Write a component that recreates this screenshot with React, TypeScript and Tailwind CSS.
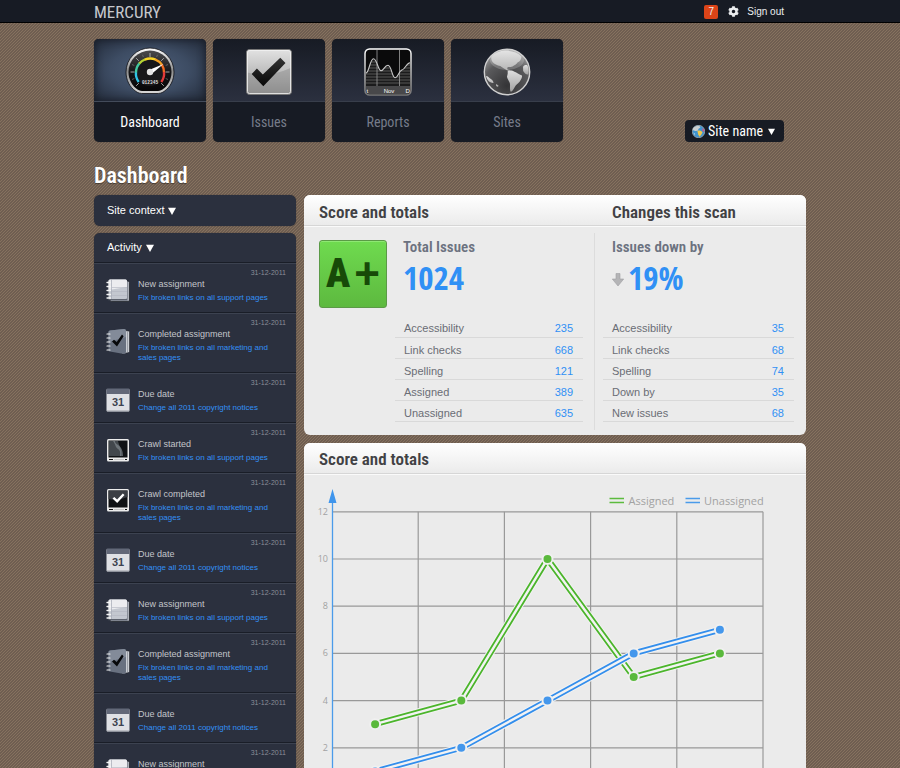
import type { ReactNode } from "react";
import { FaCog } from "react-icons/fa";

const NARROW = "font-['Roboto_Condensed','Liberation_Sans_Narrow',sans-serif]";
const DISPLAY = "font-['Open_Sans_Condensed','Roboto_Condensed',sans-serif]";

/* ---------- Navigation icons ---------- */

function GaugeIcon() {
  return (
    <svg viewBox="0 0 50 48" className="h-12 w-[50px]" aria-hidden="true">
      <defs>
        <linearGradient id="gRim" x1="0" y1="0" x2="0" y2="1">
          <stop offset="0" stopColor="#fff" />
          <stop offset="0.5" stopColor="#8d8d8d" />
          <stop offset="1" stopColor="#d8d8d8" />
        </linearGradient>
        <linearGradient id="gFace" x1="0" y1="0" x2="0" y2="1">
          <stop offset="0" stopColor="#4b4b4d" />
          <stop offset="0.55" stopColor="#131315" />
          <stop offset="1" stopColor="#060607" />
        </linearGradient>
      </defs>
      <path d="M11 44.500C4.500 40 1 33 1 25a24 24 0 0 1 48 0c0 8-3.500 15-10 19.500-2.500 1.800-5 2-7 2H18c-2 0-4.500-.2-7-2z" fill="url(#gRim)" stroke="#101217" strokeWidth=".8" />
      <path d="M12.500 42.500C7 38.500 3.500 32.500 3.500 25a21.500 21.500 0 0 1 43 0c0 7.500-3.500 13.500-9 17.500-2 1.300-4 1.500-6 1.500h-13c-2 0-4-.2-6-1.500z" fill="url(#gFace)" />
      <path d="M25 6v4M5.500 25h4M40.500 25h4M11.200 11.200l2.600 2.600M38.800 11.200l-2.600 2.600M11.200 38.800l2.600-2.600M38.800 38.800l-2.600-2.600" stroke="#b5b5b5" strokeWidth=".9" />
      <path d="M17.500 7.800l.9 2.200M32.500 7.800l-.9 2.200M7 17.500l2.300 1M43 17.500l-2.300 1M7 32.500l2.300-1M43 32.500l-2.300-1" stroke="#777" strokeWidth=".7" />
      <circle cx="25" cy="25" r="14" fill="#18181a" />
      <g fill="none" strokeWidth="2.400">
        <path d="M13.700 35A14 14 0 0 1 11 25" stroke="#2fc3e6" />
        <path d="M11 25.500A14 14 0 0 1 14.500 16.200" stroke="#43c9a0" />
        <path d="M14.300 16.500A14 14 0 0 1 20 12.500" stroke="#b5d334" />
        <path d="M19.800 12.600A14 14 0 0 1 30.500 12.500" stroke="#f7d325" />
        <path d="M30 12.300A14 14 0 0 1 37 18" stroke="#f5a021" />
        <path d="M36.800 17.600A14 14 0 0 1 39 25.500" stroke="#f26a21" />
        <path d="M39 25A14 14 0 0 1 36.300 35" stroke="#e23a3a" />
      </g>
      <path d="M24 23L38.500 17 26.500 27z" fill="#fff" />
      <circle cx="25" cy="25" r="3.200" fill="#e3e3e3" />
      <text x="25" y="37" textAnchor="middle" fontSize="4.500" fontWeight="700" fill="#ddd" fontFamily="Liberation Mono, monospace">012345</text>
    </svg>
  );
}

function CheckIcon() {
  return (
    <svg viewBox="0 0 46 46" className="h-[46px] w-[46px]" aria-hidden="true">
      <defs>
        <linearGradient id="cBox" x1="0" y1="0" x2="0" y2="1">
          <stop offset="0" stopColor="#e2e2e2" />
          <stop offset="1" stopColor="#9a9a9a" />
        </linearGradient>
        <linearGradient id="cMark" x1="0" y1="0" x2="0" y2="1">
          <stop offset="0" stopColor="#333" />
          <stop offset="1" stopColor="#080808" />
        </linearGradient>
      </defs>
      <rect x=".5" y=".5" width="45" height="45" rx="3" fill="url(#cBox)" stroke="#777" />
      <path d="M1.500 23.500Q23 29 44.500 19V43a2 2 0 0 1-2 2h-39a2 2 0 0 1-2-2z" fill="#777" opacity=".35" />
      <rect x="1.500" y="1.500" width="43" height="43" rx="2" fill="none" stroke="#f3f3f3" opacity=".8" />
      <path d="M5.700 25L10.900 19.500 16.800 25.500 34.300 8.700 39.500 14 17.300 37.200z" fill="url(#cMark)" />
    </svg>
  );
}

function ReportsIcon() {
  return (
    <svg viewBox="0 0 48 48" className="h-12 w-12" aria-hidden="true">
      <defs>
        <linearGradient id="rRim" x1="0" y1="0" x2="0" y2="1">
          <stop offset="0" stopColor="#fff" />
          <stop offset="1" stopColor="#777" />
        </linearGradient>
        <clipPath id="rArea">
          <path d="M2 25C5 25 6 10.700 9.500 10.700S14 22.700 17 22.700 20.500 17.300 24 17.300 28 29.700 31 29.700 35 22.500 38 22 42.500 15 46 14.700V38H2z" />
        </clipPath>
      </defs>
      <rect x="1" y="1" width="46" height="46" rx="4.500" fill="#0a0a0b" stroke="url(#rRim)" strokeWidth="1.500" />
      <g clipPath="url(#rArea)">
        <rect x="2" y="8" width="44" height="30" fill="#1b1b1c" />
        <path d="M2 14h44M2 17h44M2 20h44M2 23h44M2 26h44M2 29h44M2 32h44M2 35h44" stroke="#666" strokeWidth=".8" />
      </g>
      <path d="M13 2V38M35.500 2V38" stroke="#8d8d8d" strokeWidth=".9" />
      <path d="M2 25C5 25 6 10.700 9.500 10.700S14 22.700 17 22.700 20.500 17.300 24 17.300 28 29.700 31 29.700 35 22.500 38 22 42.500 15 46 14.700" fill="none" stroke="#c9c9c9" strokeWidth="1.100" />
      <path d="M2 38H46V43a3 3 0 0 1-3 3H5a3 3 0 0 1-3-3z" fill="#48484a" />
      <g fill="#fff" fontSize="6" fontFamily="Liberation Sans, sans-serif">
        <text x="2.500" y="44.500">t</text>
        <text x="25" y="44.500" textAnchor="middle">Nov</text>
        <text x="41.500" y="44.500">D</text>
      </g>
    </svg>
  );
}

function SitesIcon() {
  return (
    <svg viewBox="0 0 48 48" className="h-12 w-12" aria-hidden="true">
      <defs>
        <radialGradient id="sSea" cx=".5" cy=".8" r=".85">
          <stop offset="0" stopColor="#343436" />
          <stop offset="0.6" stopColor="#5a5a5c" />
          <stop offset="1" stopColor="#b5b5b5" />
        </radialGradient>
        <linearGradient id="sLand" x1="0" y1="0" x2="0" y2="1">
          <stop offset="0" stopColor="#dedede" />
          <stop offset="1" stopColor="#a2a2a2" />
        </linearGradient>
      </defs>
      <circle cx="24" cy="24" r="22.700" fill="url(#sSea)" stroke="#cfcfcf" strokeWidth="1.400" />
      <g fill="url(#sLand)">
        <path d="M8.500 8C12 4.500 17 3 22 2.500c7 0 13 2 16.500 6-.2 3-1.500 5-4 6-1 2-3 2.500-5 4l-2 .5c-1 .3-2.500-.2-3.200.8-.3 1.500.7 2 2 2l1.500 1.200c-2 .5-4-.7-5.500-1.700-2-1-3-2-5-3.300-3-.5-6-2-7.800-4-1.300-2-1.600-4-1-6z" />
        <path d="M24.500 23.500c2-1.500 5-1 7 .3 2.500 1 4 2.700 7.500 3.700.5 2-1.200 4-2.200 6-1.800 2.500-4 3-5 5.500-1 2-2.500 4.500-4 4.700-1.300-1.500-.6-5-.8-7.700-.3-2.500-2.500-4.500-3-7 .2-2 1.200-3.500.5-5.500z" />
        <path d="M40 19c1-2 3-2.500 4.500-1.500 1.200 3 1.600 6 .7 9-2 .3-4-1.500-5-3.500z" />
        <path d="M3 28c2 0 3 1.700 4.500 2.800 1.500.7 2.500 2 3.200 4-1.500.5-3-.5-4.700-1.300C4.500 32 3.500 30 3 28zM13 36l2.500 1.500-.5 1.500-2-1z" />
      </g>
      <ellipse cx="24" cy="12" rx="17" ry="10" fill="#fff" opacity=".2" />
    </svg>
  );
}

function SmallGlobe() {
  return (
    <svg viewBox="0 0 48 48" className="h-[13px] w-[13px]" aria-hidden="true">
      <circle cx="24" cy="24" r="23" fill="#3f93cf" stroke="#9ea7ae" strokeWidth="3" />
      <path d="M3 14C9 4 19 2 27 3l4 7-6 3-4 8-9 1-8-3z" fill="#c9ced0" />
      <path d="M20 22c6-3 14-1 19 5l-5 9-6 7-5-8z" fill="#f2c84c" />
      <path d="M38 12l6 5 1 9-6-4z" fill="#d94c86" />
      <path d="M5 28l7 5-2 4z" fill="#d8e8f0" />
    </svg>
  );
}

/* ---------- Activity icons ---------- */

function NotebookIcon() {
  return (
    <svg viewBox="0 0 24 25" className="h-[25px] w-6" aria-hidden="true">
      <rect x="4" y="3" width="19.500" height="20.500" rx="1.500" fill="#8b909a" stroke="#15171d" strokeWidth=".6" />
      <path d="M2.500 21.500H21" stroke="#5d626d" strokeWidth="1.500" />
      <path d="M22.500 4v18.500" stroke="#c8cad0" strokeWidth=".6" />
      <rect x="2.500" y="1.500" width="18.500" height="19.500" rx="1.500" fill="#c3c7cf" />
      <path d="M4 1.500H19.500a1.500 1.500 0 0 1 1.500 1.500V9L2.500 12V3a1.500 1.500 0 0 1 1.500-1.500z" fill="#ececef" />
      <path d="M5.500 1.500v19.500" stroke="#a3a8b3" strokeWidth=".7" />
      <path d="M6 9.500h15M6 13.500h15M6 17.500h15" stroke="#b2b6c0" strokeWidth=".6" />
      <path d="M1 4.500h3.500M1 8.500h3.500M1 12.500h3.500M1 16.500h3.500M1 20h3.500" stroke="#f4f4f4" strokeWidth="1.300" strokeLinecap="round" />
    </svg>
  );
}

function NotebookCheckIcon() {
  return (
    <svg viewBox="0 0 24 27" className="h-[27px] w-6" aria-hidden="true">
      <path d="M18 2.500l4.500.5a1 1 0 0 1 1 1V23.500a1 1 0 0 1-1 1L16 26z" fill="#c9ccd2" stroke="#15171d" strokeWidth=".5" />
      <path d="M21.500 3.500v21" stroke="#858a94" strokeWidth=".7" />
      <path d="M4 2.500L18 1a2 2 0 0 1 2 2V24a2 2 0 0 1-2 2L4 23.500a1.500 1.500 0 0 1-1.500-1.500V4A1.500 1.500 0 0 1 4 2.500z" fill="#697180" />
      <path d="M4 2.500L18 1a2 2 0 0 1 2 2v6L2.500 14V4A1.500 1.500 0 0 1 4 2.500z" fill="#838b99" />
      <path d="M6 13.500l2-1.800 2.700 2.300L16 6.500l1.600 1.800L11 18.500z" fill="#07080a" />
      <path d="M1 6h3M1 10h3M1 14h3M1 18h3M1 22h3" stroke="#f4f4f4" strokeWidth="1.200" strokeLinecap="round" />
    </svg>
  );
}

function CalendarIcon() {
  return (
    <svg viewBox="0 0 24 24" className="h-6 w-6" aria-hidden="true">
      <rect x=".5" y="1" width="23" height="22.500" rx="1" fill="#dfe1e5" />
      <path d="M.5 6V1.500A1 1 0 0 1 1.500.5h21a1 1 0 0 1 1 1V6z" fill="#626878" />
      <path d="M1 23h22" stroke="#9a9da5" />
      <text x="12" y="18" textAnchor="middle" fontSize="11" fontWeight="700" fill="#3d4450" fontFamily="Liberation Sans, sans-serif">31</text>
    </svg>
  );
}

function MonitorIcon({ done }: { done?: boolean }) {
  return (
    <svg viewBox="0 0 24 24" className="h-6 w-6" aria-hidden="true">
      <rect x="1" y="1" width="22" height="22.500" rx="1.500" fill="#ececec" />
      <rect x="2.500" y="2.500" width="19" height="17" fill="#101215" />
      {done ? (
        <path d="M2.500 2.500h19V9Q12 13 2.500 11z" fill="#3b3e44" />
      ) : (
        <>
          <path d="M3 3h9c1 5 4 8 3 15H3z" fill="#42474c" />
          <path d="M7 3c3 4 2 6 5 8s2 5 2 7h3c0-6-2-9-5-11S9 4 9 3z" fill="#8b9297" opacity=".6" />
        </>
      )}
      {done && <path d="M6.500 10.500l1.800-1.600 2.800 2.600L16.800 5.500 18.500 7l-7.300 8z" fill="#fff" />}
      <path d="M3 21.500h4M19 21.500h2" stroke="#111" strokeWidth="1.200" />
      <path d="M8 21.500h10" stroke="#c4c4c4" />
    </svg>
  );
}

function Caret({ className }: { className: string }) {
  return (
    <svg viewBox="0 0 8 8" className={className} aria-hidden="true">
      <path d="M0 .8H8L4 8z" fill="#fff" />
    </svg>
  );
}

/* ---------- Data ---------- */

const tabs: { label: string; icon: ReactNode; active?: boolean }[] = [
  { label: "Dashboard", icon: <GaugeIcon />, active: true },
  { label: "Issues", icon: <CheckIcon /> },
  { label: "Reports", icon: <ReportsIcon /> },
  { label: "Sites", icon: <SitesIcon /> },
];

const kinds = {
  added: { title: "New assignment", text: "Fix broken links on all support pages", icon: <NotebookIcon /> },
  completed: { title: "Completed assignment", text: "Fix broken links on all marketing and sales pages", icon: <NotebookCheckIcon /> },
  due: { title: "Due date", text: "Change all 2011 copyright notices", icon: <CalendarIcon /> },
  crawl: { title: "Crawl started", text: "Fix broken links on all support pages", icon: <MonitorIcon /> },
  crawled: { title: "Crawl completed", text: "Fix broken links on all marketing and sales pages", icon: <MonitorIcon done /> },
};

const feed: (keyof typeof kinds)[] = [
  "added", "completed", "due", "crawl", "crawled", "due", "added", "completed", "due", "added",
];

const totals: [string, number][] = [
  ["Accessibility", 235],
  ["Link checks", 668],
  ["Spelling", 121],
  ["Assigned", 389],
  ["Unassigned", 635],
];

const changes: [string, number][] = [
  ["Accessibility", 35],
  ["Link checks", 68],
  ["Spelling", 74],
  ["Down by", 35],
  ["New issues", 68],
];

/* ---------- Pieces ---------- */

function CountTable({ rows, label }: { rows: [string, number][]; label: string }) {
  return (
    <table aria-label={label} className="w-full border-collapse text-[11px]">
      <tbody>
        {rows.map(([name, count]) => (
          <tr key={name} className="h-[21px] border-b border-[#d9d9d9]">
            <th scope="row" className="p-0 pt-1 pl-[9px] text-left leading-4 font-normal text-[#6a6d75]">{name}</th>
            <td className="p-0 pt-1 pr-[10px] text-right leading-4 text-[#3090f5]">{count}</td>
          </tr>
        ))}
      </tbody>
    </table>
  );
}

const X0 = 28;
const STEP_X = 86.2;
const px = (i: number) => X0 + STEP_X * (i + 0.5);
const py = (v: number) => 321 - v * 23.6;

function Series({ values, line, dot }: { values: number[]; line: string; dot: string }) {
  const points = values.map((v, i) => `${px(i)},${py(v)}`).join(" ");
  return (
    <g fill="none">
      <polyline points={points} stroke="#f3f3f3" strokeWidth="8" />
      <polyline points={points} stroke={line} strokeWidth="6" />
      <polyline points={points} stroke="#f3f3f3" strokeWidth="2.400" />
      {values.map((v, i) => (
        <circle key={i} cx={px(i)} cy={py(v)} r="5" fill={dot} stroke="#f0f0f0" strokeWidth="2" />
      ))}
    </g>
  );
}

function LegendMark({ x, color }: { x: number; color: string }) {
  return <path d={`M${x} 24.500h14.500M${x} 28.500h14.500`} stroke={color} strokeWidth="1.500" />;
}

function Chart() {
  return (
    <svg viewBox="0 0 502 340" className="block w-full" role="img" aria-label="Assigned and unassigned issues">
      <g stroke="#999" strokeWidth="1.200">
        {[0, 2, 4, 6, 8, 10, 12].map((v) => (
          <line key={v} x1={X0} x2={X0 + STEP_X * 5} y1={py(v)} y2={py(v)} />
        ))}
        {[1, 2, 3, 4, 5].map((i) => (
          <line key={i} x1={X0 + STEP_X * i} x2={X0 + STEP_X * i} y1={py(12)} y2={py(0)} />
        ))}
      </g>
      <g fill="#a2a2a2" fontSize="9" textAnchor="end" fontFamily="Open Sans, sans-serif">
        {[0, 2, 4, 6, 8, 10, 12].map((v) => (
          <text key={v} x="24" y={py(v) + 3}>{v}</text>
        ))}
      </g>
      <path d={`M${X0 + 0.5} 22V321`} stroke="#4a9bea" strokeWidth="1.300" />
      <path d="M28.500 15L32.500 29H24.500z" fill="#3f95ec" />
      <LegendMark x={305.5} color="#5cbb3e" />
      <LegendMark x={381.5} color="#4a9bea" />
      <g fill="#a2a2a2" fontSize="11" fontFamily="Open Sans, sans-serif">
        <text x="324.500" y="31">Assigned</text>
        <text x="400" y="31">Unassigned</text>
      </g>
      <Series values={[3, 4, 10, 5, 6]} line="#4bb52b" dot="#5ab93c" />
      <Series values={[1, 2, 4, 6, 7]} line="#338eec" dot="#4497ec" />
    </svg>
  );
}

const cardHead =
  "flex h-[31px] items-center border-b border-[#d6d6d6] bg-linear-to-b from-white to-[#ebebeb] pt-[5px] text-[17px] font-semibold text-[#414144] shadow-[0_1px_0_#fafafa]";
const sidePanel = "rounded-md bg-[#2b303e] shadow-[0_0_1px_rgba(20,22,30,0.8)]";
const sideButton = "flex w-full items-center gap-1 px-[13px] text-[11px] text-white";
const figureLabel = "h-[15px] text-[15px] leading-[15px] font-semibold text-[#6c7280]";
const figure = "mt-1 mb-5 flex h-[37px] items-center gap-1 text-[33px] leading-[37px] font-bold text-[#3090f5]";

export default function App() {
  return (
    <div className="min-h-screen bg-[#7b6959] bg-[linear-gradient(135deg,#6f5e51_25%,#86725f_25%_50%,#6f5e51_50%_75%,#86725f_75%)] bg-[length:3px_3px] font-['Liberation_Sans',Arial,sans-serif]">
      <header className="border-b border-black bg-[#171b24] px-4 pt-px">
        <div className="mx-auto flex h-[21px] max-w-[712px] items-center">
          <div className={`${NARROW} text-[17px] leading-5 text-[#c6c8cd]`}>MERCURY</div>
          <div className="mr-[22px] ml-auto flex items-center text-[10px] text-[#eceef0]">
            <a href="#notifications" aria-label="7 notifications" className="mr-[10px] flex h-[14px] w-[14px] items-center justify-center rounded-[2px] bg-[#dc4418]">7</a>
            <button type="button" aria-label="Settings" className="mr-2">
              <FaCog className="h-[11px] w-[11px]" />
            </button>
            <a href="#signout">Sign out</a>
          </div>
        </div>
      </header>

      <div className="px-4">
        <div className="mx-auto max-w-[712px] pt-4">
          <div className="flex items-end justify-between">
            <nav className="flex gap-[7px]">
              {tabs.map((tab) => (
                <a
                  key={tab.label}
                  href={`#${tab.label.toLowerCase()}`}
                  aria-current={tab.active ? "page" : undefined}
                  className="w-28 overflow-hidden rounded-[5px] bg-[#171b24] shadow-[0_0_1px_rgba(20,22,30,0.8)]"
                >
                  <span
                    className={
                      tab.active
                        ? "flex h-[63px] items-center justify-center border-b border-[#434b5a] bg-[radial-gradient(ellipse_at_center,#4d5e79_0%,#3d4c63_50%,#232b3a_100%)] pt-0.5 shadow-[inset_0_0_8px_#171b24]"
                        : "flex h-[63px] items-center justify-center border-b border-[#383e4b] bg-linear-to-b from-[#171b24] to-[#2b303f] pt-1"
                    }
                  >
                    {tab.icon}
                  </span>
                  <span
                    className={`${NARROW} flex h-[40px] items-center justify-center text-[14px] ${tab.active ? "text-white" : "text-[#767b8a]"}`}
                  >
                    {tab.label}
                  </span>
                </a>
              ))}
            </nav>
            <div className="relative mr-[22px] flex h-[22px] items-center rounded bg-[#171b24] pl-[7px]">
              <SmallGlobe />
              <select aria-label="Site" className={`${NARROW} appearance-none bg-transparent pr-[21px] pl-[3px] text-[14px] leading-5 text-white`}>
                <option>Site name</option>
              </select>
              <span className="pointer-events-none absolute right-[9px]">
                <Caret className="h-[7px] w-[7px]" />
              </span>
            </div>
          </div>

          <h1 className={`${NARROW} mt-[19px] mb-[5px] text-[22px] leading-[29px] font-semibold text-white [text-shadow:0_1px_1px_rgba(0,0,0,0.4)]`}>Dashboard</h1>

          <div className="flex items-start gap-2">
            <aside className="w-[202px] shrink-0">
              <div className={sidePanel}>
                <button type="button" className={`${sideButton} h-[31px]`}>
                  Site context
                  <Caret className="h-2 w-2" />
                </button>
              </div>
              <section className={`${sidePanel} mt-[7px] overflow-hidden`}>
                <button type="button" aria-expanded="true" className={`${sideButton} h-[29px]`}>
                  Activity
                  <Caret className="h-2 w-2" />
                </button>
                <ul>
                  {feed.map((kind, i) => {
                    const item = kinds[kind];
                    return (
                      <li key={i} className="flex min-h-[50px] gap-2 border-t border-[#191d27] pr-[10px] pb-[9px] pl-[12px] shadow-[inset_0_1px_0_#3c4250]">
                        <div className="mt-[15px] h-6 w-6 shrink-0">{item.icon}</div>
                        <div className="min-w-0 flex-1 pt-[6px]">
                          <time dateTime="2011-12-31" className="block text-right text-[7px] leading-[8px] text-[#8a8e98]">31-12-2011</time>
                          <h3 className="mt-px text-[9px] leading-3 text-[#c3c5ca]">{item.title}</h3>
                          <a href="#activity" className="mt-[3px] block text-[8px] leading-[10px] text-[#3391f7]">{item.text}</a>
                        </div>
                      </li>
                    );
                  })}
                </ul>
              </section>
            </aside>

            <main className="min-w-0 flex-1">
              <section className="overflow-hidden rounded-md bg-[#ebebeb]">
                <div className={`${cardHead} ${NARROW}`}>
                  <h2 className="w-[294px] pl-[15px]">Score and totals</h2>
                  <h2 className="pl-[14px]">Changes this scan</h2>
                </div>
                <div className="flex pt-[7px] pb-[5px]">
                  <div className="flex w-[291px] shrink-0 border-r border-[#dcdcdc] pt-[7px] pb-2 pl-[15px]">
                    <div className={`${NARROW} flex h-[68px] w-[68px] shrink-0 items-center justify-center gap-1 rounded-[3px] border border-[#5b9a47] bg-linear-to-b from-[#6fdb4f] to-[#5db93f] text-[#174a08] shadow-[inset_0_1px_0_#8ee873]`}>
                      <span className="text-[40px] leading-10 font-black">A</span>
                      <span className="font-['Liberation_Sans',sans-serif] text-[44px] leading-10 font-bold">+</span>
                    </div>
                    <div className="mr-[11px] ml-2 flex-1">
                      <h3 className={`${NARROW} ${figureLabel} pl-2`}>Total Issues</h3>
                      <p className={`${DISPLAY} ${figure} pl-2`}>1024</p>
                      <CountTable rows={totals} label="Total issues by type" />
                    </div>
                  </div>
                  <div className="mr-3 ml-2 min-w-0 flex-1 pt-[7px]">
                    <h3 className={`${NARROW} ${figureLabel} pl-[9px]`}>Issues down by</h3>
                    <p className={`${DISPLAY} ${figure} pl-[9px]`}>
                      <svg viewBox="0 0 12 14" className="mt-1 h-[14px] w-3" role="img" aria-label="down">
                        <path d="M4 .5H8V6h3.700L6 13 .3 6H4z" fill="#b4b4b6" stroke="#a0a0a3" strokeWidth=".6" />
                      </svg>
                      19%
                    </p>
                    <CountTable rows={changes} label="Changes by type" />
                  </div>
                </div>
              </section>

              <section className="mt-2 overflow-hidden rounded-md bg-[#ebebeb]">
                <div className={`${cardHead} ${NARROW}`}>
                  <h2 className="pl-[15px]">Score and totals</h2>
                </div>
                <Chart />
              </section>
            </main>
          </div>
        </div>
      </div>
    </div>
  );
}
